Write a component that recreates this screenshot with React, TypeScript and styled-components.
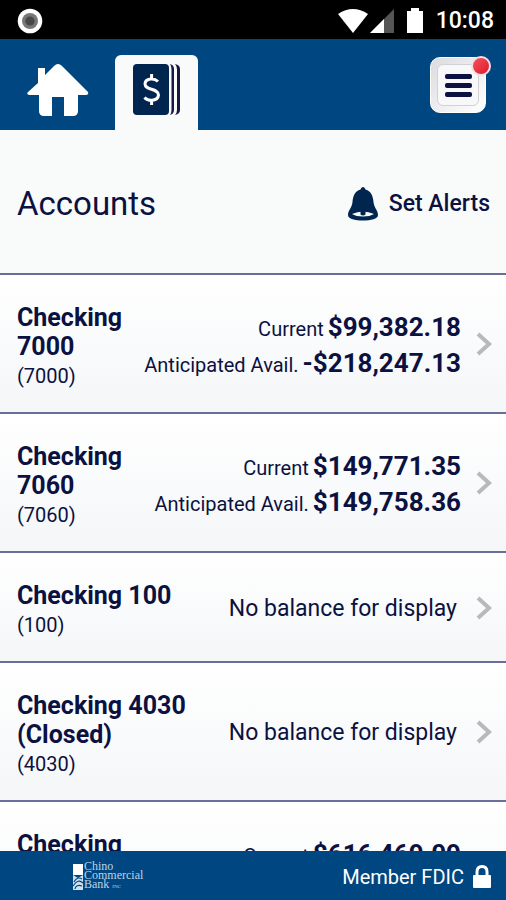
import React from "react";
import styled, { createGlobalStyle } from "styled-components";

const NAVY = "#0b1140";
const BLUE = "#004680";

const GlobalStyle = createGlobalStyle`
  * { box-sizing: border-box; }
  body { margin: 0; background: #f9fafa; }
  body, button { font-family: Roboto, "Liberation Sans", sans-serif; }
`;

const Screen = styled.div`
  display: flex;
  flex-direction: column;
  height: 100vh;
  overflow: hidden;
  color: ${NAVY};
`;

const StatusBar = styled.div`
  flex: none;
  display: flex;
  align-items: center;
  justify-content: space-between;
  height: 39px;
  padding: 2px 12px 0 17px;
  background: #000;
  color: #fff;
`;

const StatusIcons = styled.div`
  display: flex;
  align-items: center;
  gap: 12px;
`;

const Clock = styled.time`
  font-size: 23px;
  font-weight: 500;
  line-height: 24px;
`;

const Header = styled.header`
  flex: none;
  display: flex;
  align-items: flex-end;
  justify-content: space-between;
  height: 91px;
  padding: 0 20px 0 27px;
  background: ${BLUE};
`;

const Tabs = styled.nav`
  display: flex;
  gap: 26px;
`;

const Tab = styled.a<{ $active?: boolean }>`
  display: flex;
  justify-content: center;
  width: ${(p) => (p.$active ? "83px" : "62px")};
  height: 75px;
  padding-top: 8px;
  border-radius: 6px 6px 0 0;
  background: ${(p) => (p.$active ? "#f9fafa" : "transparent")};
`;

const MenuButton = styled.button`
  position: relative;
  display: flex;
  width: 56px;
  height: 56px;
  margin-bottom: 17px;
  padding: 6px;
  border: 1px solid #fff;
  border-radius: 10px;
  background: linear-gradient(135deg, #dcdcde, #f1f1f3 60%, #fff);
`;

const MenuFace = styled.span`
  flex: 1;
  align-self: stretch;
  display: flex;
  flex-direction: column;
  align-items: center;
  justify-content: center;
  gap: 4px;
  border: 1px solid #d2d2d6;
  border-radius: 6px;
  background: #f8f8fa;
`;

const MenuLine = styled.span`
  width: 27px;
  height: 5px;
  border-radius: 2px;
  background: ${NAVY};
`;

const Badge = styled.span`
  position: absolute;
  top: -2px;
  right: -6px;
  width: 20px;
  height: 20px;
  border: 2px solid #f3dfe4;
  border-radius: 50%;
  background: linear-gradient(135deg, #f5525b, #dc1b2b);
`;

const TitleBar = styled.div`
  flex: none;
  display: flex;
  align-items: center;
  justify-content: space-between;
  height: 143px;
  padding: 4px 16px 0 17px;
  background: #f9fafa;
`;

const Title = styled.h1`
  margin: 0;
  font-size: 33px;
  font-weight: 400;
  line-height: 40px;
`;

const AlertsButton = styled.button`
  display: flex;
  align-items: center;
  gap: 11px;
  padding: 0;
  border: 0;
  background: none;
  color: ${NAVY};
  font-size: 23px;
  font-weight: 500;
  line-height: 32px;
`;

const AccountList = styled.ul`
  flex: 1;
  min-height: 0;
  margin: 0;
  padding: 0;
  overflow-y: auto;
  scrollbar-width: none;
  list-style: none;
`;

const AccountRow = styled.button`
  display: flex;
  align-items: center;
  width: 100%;
  padding: 22px 14px 21px 17px;
  border: 0;
  border-top: 2px solid #696e9b;
  background: linear-gradient(#fff, #f4f6f8);
  color: ${NAVY};
  text-align: left;
`;

const AccountName = styled.span<{ $wide?: boolean }>`
  flex: none;
  width: ${(p) => (p.$wide ? "184px" : "110px")};
  padding-top: 6px;
  font-size: 25px;
  font-weight: 700;
  line-height: 29px;
`;

const AccountNumber = styled.span`
  display: block;
  font-size: 20px;
  font-weight: 400;
  line-height: 30px;
`;

const Balances = styled.span`
  flex: 1;
  display: flex;
  flex-direction: column;
  align-items: flex-end;
  padding-top: 2px;
  white-space: nowrap;
`;

const Balance = styled.span`
  display: flex;
  align-items: baseline;
  gap: 4px;
  font-size: 20px;
  line-height: 24px;
`;

const Amount = styled.strong`
  font-size: 26px;
  font-weight: 700;
  line-height: 36px;
`;

const NoBalance = styled.span`
  padding-right: 4px;
  font-size: 23px;
  line-height: 30px;
`;

const Chevron = styled.svg`
  flex: none;
  width: 16px;
  height: 24px;
  margin-left: 15px;
`;

const Footer = styled.footer`
  flex: none;
  display: flex;
  align-items: center;
  justify-content: space-between;
  height: 49px;
  padding: 2px 15px 0 72px;
  background: ${BLUE};
  color: #fff;
`;

const Brand = styled.div`
  display: flex;
  align-items: center;
  color: #b8d4e8;
  font-family: "Liberation Serif", serif;
  font-size: 12px;
  line-height: 9px;
`;

const TradeMark = styled.span`
  font-size: 5px;
`;

const Fdic = styled.div`
  display: flex;
  align-items: center;
  gap: 9px;
  font-size: 20px;
  line-height: 28px;
`;

type Account = {
  name: string;
  number: string;
  current?: string;
  available?: string;
};

const accounts: Account[] = [
  { name: "Checking 7000", number: "7000", current: "$99,382.18", available: "-$218,247.13" },
  { name: "Checking 7060", number: "7060", current: "$149,771.35", available: "$149,758.36" },
  { name: "Checking 100", number: "100" },
  { name: "Checking 4030 (Closed)", number: "4030" },
  { name: "Checking 7080", number: "7080", current: "$616,469.09", available: "$616,469.09" },
];

const RecordIcon = () => (
  <svg width="26" height="26" viewBox="0 0 26 26" aria-hidden="true">
    <circle cx="13" cy="13" r="12.3" fill="#fff" />
    <circle cx="13" cy="13" r="8" fill="#777" />
    <circle cx="13" cy="13" r="4.6" fill="#484848" />
  </svg>
);

const SignalIcons = () => (
  <svg width="86" height="26" viewBox="0 0 86 26" aria-hidden="true">
    <path d="M0 6Q15-4 30 6L15 25Z" fill="#fff" />
    <path d="M56 1V25H32Z" fill="#555" />
    <path d="M46 11V25H32Z" fill="#fff" />
    <path d="M69 3h4V0h8v3h4v22H69Z" fill="#fff" />
  </svg>
);

const HomeIcon = () => (
  <svg width="62" height="54" viewBox="0 0 62 54" aria-hidden="true">
    <path
      d="M11 5h7v7L27 3q4-4 8 0L61 29q1 3-2 3h-8v16q0 5-5 5h-9V34H25v19h-8q-5 0-5-5V32H2q-3-1-1-3l10-9Z"
      fill="#fff"
    />
  </svg>
);

const LedgerIcon = () => (
  <svg width="48" height="52" viewBox="0 0 48 52" aria-hidden="true">
    <rect x="0" y="1" width="36" height="51" rx="4" fill="#00264f" />
    <path d="M37 1q4 1 4 5v41q0 4-4 5q1.500-2 1.500-5V6Q38.500 3 37 1Z" fill="#171647" />
    <path d="M42 1q5 1 5 5v41q0 4-5 5q2-2 2-5V6Q44 3 42 1Z" fill="#171647" />
    <path
      d="M25 18.500Q22 15.500 17.500 16Q12 16.700 12 21C12 27.500 25.500 25 25.500 32Q25 37 19 37.300Q14 37.500 11.500 34.500M18.600 11v5M18.600 37v5"
      fill="none"
      stroke="#fff"
      strokeWidth="3"
    />
  </svg>
);

const BellIcon = () => (
  <svg width="30" height="34" viewBox="0 0 30 34" aria-hidden="true">
    <path
      d="M15 0q2 0 2.500 2.500C23 4 25 9 25.500 15C26 21 30 23 30 28C30 32 23 33.500 15 33.500S0 32 0 28C0 23 4 21 4.500 15C5 9 7 4 12.500 2.500Q13 0 15 0Z"
      fill="#00264f"
    />
    <path d="M4 27Q15 22 26 27Q22 29.500 15 29.500T4 27Z" fill="#f9fafa" />
    <path d="M12.500 24h5v3.500q-2.500 2-5 0Z" fill="#00264f" />
  </svg>
);

const BrandMark = () => (
  <svg width="12" height="28" viewBox="0 0 12 28" aria-hidden="true">
    <path d="M1 1h10v11H1Z" fill="#fff" />
    <path d="M1 12l5 3 5-3v15H1Z" fill="#cfe0ec" />
    <path d="M2 19q3-6 8-3M1 23q5-8 10-3M3 26q1-5 7-3" fill="none" stroke={BLUE} strokeWidth="1.200" />
  </svg>
);

const LockIcon = () => (
  <svg width="18" height="24" viewBox="0 0 18 24" aria-hidden="true">
    <path d="M4 12V7q0-5.500 5-5.500T14 7v5" fill="none" stroke="#fff" strokeWidth="3" />
    <rect y="10" width="18" height="13" rx="1" fill="#fff" />
  </svg>
);

const AccountItem = ({ account }: { account: Account }) => (
  <li>
    <AccountRow type="button">
      <AccountName $wide={!account.current}>
        {account.name}
        <AccountNumber>({account.number})</AccountNumber>
      </AccountName>
      <Balances>
        {account.current ? (
          <>
            <Balance>
              Current <Amount>{account.current}</Amount>
            </Balance>
            <Balance>
              Anticipated Avail. <Amount>{account.available}</Amount>
            </Balance>
          </>
        ) : (
          <NoBalance>No balance for display</NoBalance>
        )}
      </Balances>
      <Chevron viewBox="0 0 16 24" aria-hidden="true">
        <path d="M2 2L13 12L2 22" fill="none" stroke="#b9b9b9" strokeWidth="4" />
      </Chevron>
    </AccountRow>
  </li>
);

export default function App() {
  return (
    <Screen>
      <GlobalStyle />
      <StatusBar>
        <RecordIcon />
        <StatusIcons>
          <SignalIcons />
          <Clock>10:08</Clock>
        </StatusIcons>
      </StatusBar>
      <Header>
        <Tabs>
          <Tab href="#home" aria-label="Home">
            <HomeIcon />
          </Tab>
          <Tab href="#accounts" aria-label="Accounts" $active>
            <LedgerIcon />
          </Tab>
        </Tabs>
        <MenuButton type="button" aria-label="Menu">
          <MenuFace>
            <MenuLine />
            <MenuLine />
            <MenuLine />
          </MenuFace>
          <Badge />
        </MenuButton>
      </Header>
      <TitleBar>
        <Title>Accounts</Title>
        <AlertsButton type="button">
          <BellIcon />
          Set Alerts
        </AlertsButton>
      </TitleBar>
      <AccountList>
        {accounts.map((account) => (
          <AccountItem key={account.name} account={account} />
        ))}
      </AccountList>
      <Footer>
        <Brand>
          <BrandMark />
          <div>
            Chino
            <br />
            Commercial
            <br />
            Bank <TradeMark>INC</TradeMark>
          </div>
        </Brand>
        <Fdic>
          Member FDIC
          <LockIcon />
        </Fdic>
      </Footer>
    </Screen>
  );
}
